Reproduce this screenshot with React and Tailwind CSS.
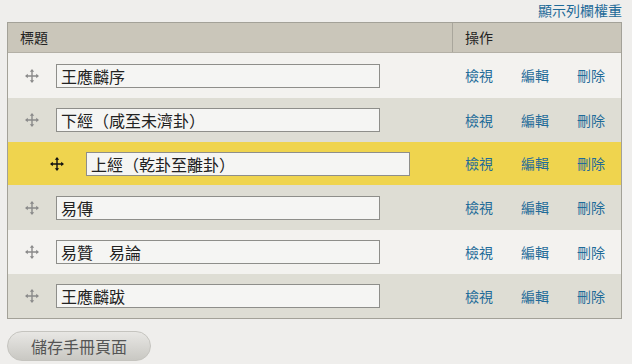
import React from "react";

const font = { fontFamily: '"Noto Sans CJK TC", "Noto Sans", sans-serif' };

function DragIcon({ dark }) {
  const c = dark ? "#111" : "#8a8a8a";
  return (
    <svg width="14" height="14" viewBox="0 0 14 14" className="block">
      <path d="M7 1.5v11M1.5 7h11" stroke={c} strokeWidth="1.4" />
      <path d="M7 0L4.8 2.8h4.4zM7 14l-2.2-2.8h4.4zM0 7l2.8-2.2v4.4zM14 7l-2.8-2.2v4.4z" fill={c} />
    </svg>
  );
}

const rows = [
  { t: "王應麟序", bg: "bg-[#f3f2ef]", h: "h-[45px]" },
  { t: "下經（咸至未濟卦）", bg: "bg-[#deddd4]", h: "h-[44px]" },
  { t: "上經（乾卦至離卦）", bg: "bg-[#efd44e]", h: "h-[43px]", indent: true },
  { t: "易傳", bg: "bg-[#deddd4]", h: "h-[45px]" },
  { t: "易贊　易論", bg: "bg-[#f3f2ef]", h: "h-[44px]" },
  { t: "王應麟跋", bg: "bg-[#deddd4]", h: "h-[44px]" },
];

export default function App() {
  return (
    <div className="w-[632px] h-[364px] bg-[#efeeec] overflow-hidden" style={font}>
      <div className="ml-[7px] w-[615px]">
        <div className="h-[22px] flex justify-end items-start pt-[2px]">
          <span className="text-[14px] leading-[17px] text-[#1f6b99]">顯示列欄權重</span>
        </div>
        <div className="border border-[#a3a198]">
          <div className="flex h-[30px] bg-[#cac6ba] border-b border-[#b3b0a6] text-[14px] text-[#222]">
            <div className="w-[445px] border-r border-[#a9a69c] flex items-center pl-[12px]">標題</div>
            <div className="flex-1 flex items-center pl-[12px]">操作</div>
          </div>
          {rows.map((r, i) => (
            <div key={i} className={`flex items-center ${r.bg} ${r.h}`}>
              <div className="w-[445px] flex items-center">
                <div className={`flex justify-center ${r.indent ? "w-[78px] pl-[20px]" : "w-[48px]"}`}>
                  <DragIcon dark={r.indent} />
                </div>
                <div className="w-[324px] h-[24px] border border-[#8e8e8a] bg-[#f5f5f3] flex items-center pl-[4px] text-[16px] text-[#222]">
                  {r.t}
                </div>
              </div>
              <div className="flex-1 flex pl-[12px] gap-[28px] text-[14px] text-[#1f6b99]">
                <span>檢視</span>
                <span>編輯</span>
                <span>刪除</span>
              </div>
            </div>
          ))}
        </div>
        <div className="mt-[12px] w-[144px] h-[30px] rounded-full border border-[#c5c4bf] bg-gradient-to-b from-[#e8e7e4] to-[#c9c8c3] flex items-center justify-center text-[16px] text-[#555]">
          儲存手冊頁面
        </div>
      </div>
    </div>
  );
}
